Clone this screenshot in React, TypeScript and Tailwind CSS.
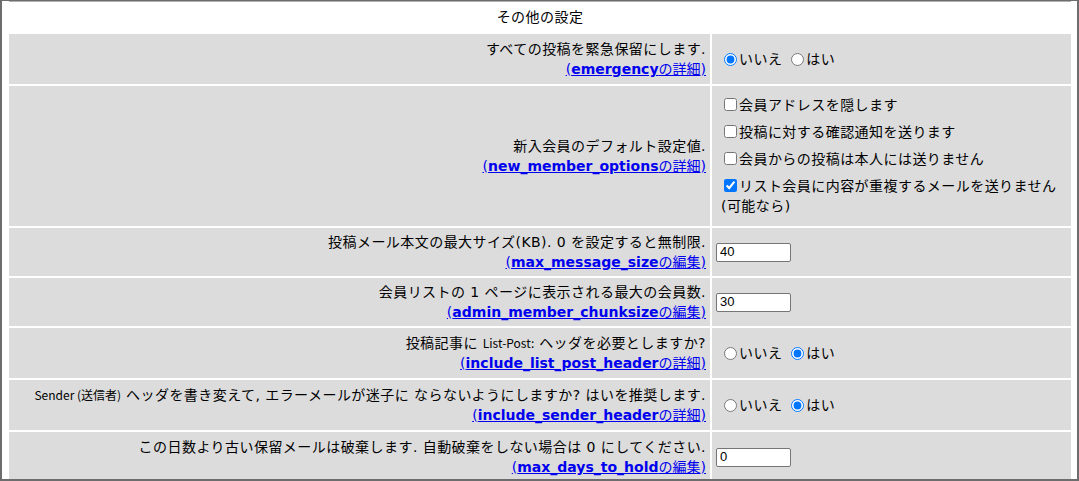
import React from "react";

function Lnk({ name, suffix }: { name: string; suffix: string }) {
  return (
    <a href="#" className="text-[#0000ee] underline tracking-normal">
      (<b>{name}</b>
      {suffix})
    </a>
  );
}

function Row({
  h,
  label,
  link,
  children,
}: {
  h: string;
  label: React.ReactNode;
  link: React.ReactNode;
  children: React.ReactNode;
}) {
  return (
    <div className={`flex gap-[2px] ${h}`}>
      <div className="w-[701px] shrink-0 bg-[#dcdcdc] flex flex-col justify-center items-end text-right pr-[4px]">
        <div className="whitespace-nowrap">{label}</div>
        <div className="whitespace-nowrap">{link}</div>
      </div>
      <div className="w-[359px] shrink-0 bg-[#dcdcdc] flex items-center px-[4px]">{children}</div>
    </div>
  );
}

function Radios({ yes }: { yes: boolean }) {
  return (
    <div className="flex items-center">
      <input type="radio" className="m-0 ml-[8px] mr-[2px] w-[13px] h-[13px]" checked={!yes} readOnly />
      <span>いいえ</span>
      <input type="radio" className="m-0 ml-[9px] mr-[2px] w-[13px] h-[13px]" checked={yes} readOnly />
      <span>はい</span>
    </div>
  );
}

function TextBox({ v }: { v: string }) {
  return (
    <input
      type="text"
      defaultValue={v}
      className="w-[75px] h-[19px] border border-[#767676] rounded-[2px] bg-white px-[3px] text-[13px] tracking-normal font-['Liberation_Sans',sans-serif] text-black outline-none"
    />
  );
}

function Check({ checked, children }: { checked: boolean; children: React.ReactNode }) {
  return (
    <div>
      <input type="checkbox" className="m-0 ml-[3px] mr-[2px] w-[13px] h-[13px] align-[-1px]" checked={checked} readOnly />
      {children}
    </div>
  );
}

export default function App() {
  return (
    <div className="w-[1079px] h-[481px] overflow-hidden bg-white border-l-2 border-r-2 border-b-2 border-t border-[#6d6d6d] font-['DejaVu_Sans','Noto_Sans_CJK_JP',sans-serif] text-[14px] leading-[20px] tracking-[0.45px] text-black">
      <div className="pl-[7px] pr-[6px]">
        <div className="h-[1px] bg-[#b0b0b0]" />
        <div className="flex flex-col gap-[2px]">
          <div className="h-[30px] flex items-center justify-center">その他の設定</div>
          <Row h="h-[50px]" label="すべての投稿を緊急保留にします." link={<Lnk name="emergency" suffix="の詳細" />}>
            <Radios yes={false} />
          </Row>
          <Row h="h-[140px]" label="新入会員のデフォルト設定値." link={<Lnk name="new_member_options" suffix="の詳細" />}>
            <div className="flex flex-col gap-[7px] pb-[2px] pl-[5px]">
              <Check checked={false}>会員アドレスを隠します</Check>
              <Check checked={false}>投稿に対する確認通知を送ります</Check>
              <Check checked={false}>会員からの投稿は本人には送りません</Check>
              <Check checked={true}>リスト会員に内容が重複するメールを送りません (可能なら)</Check>
            </div>
          </Row>
          <Row
            h="h-[48px]"
            label="投稿メール本文の最大サイズ(KB). 0 を設定すると無制限."
            link={<Lnk name="max_message_size" suffix="の編集" />}
          >
            <TextBox v="40" />
          </Row>
          <Row
            h="h-[48px]"
            label="会員リストの 1 ページに表示される最大の会員数."
            link={<Lnk name="admin_member_chunksize" suffix="の編集" />}
          >
            <TextBox v="30" />
          </Row>
          <Row
            h="h-[50px]"
            label={
              <>
                投稿記事に <span className="text-[12px] tracking-normal font-['Noto_Sans_CJK_JP',sans-serif]">List-Post:</span>{" "}
                ヘッダを必要としますか?
              </>
            }
            link={<Lnk name="include_list_post_header" suffix="の詳細" />}
          >
            <Radios yes={true} />
          </Row>
          <Row
            h="h-[50px]"
            label={
              <>
                <span className="text-[12px] tracking-normal font-['Noto_Sans_CJK_JP',sans-serif]">Sender (送信者)</span>{" "}
                ヘッダを書き変えて, エラーメールが迷子に ならないようにしますか? はいを推奨します.
              </>
            }
            link={<Lnk name="include_sender_header" suffix="の詳細" />}
          >
            <Radios yes={true} />
          </Row>
          <Row
            h="h-[50px]"
            label="この日数より古い保留メールは破棄します. 自動破棄をしない場合は 0 にしてください."
            link={<Lnk name="max_days_to_hold" suffix="の編集" />}
          >
            <TextBox v="0" />
          </Row>
        </div>
      </div>
    </div>
  );
}
